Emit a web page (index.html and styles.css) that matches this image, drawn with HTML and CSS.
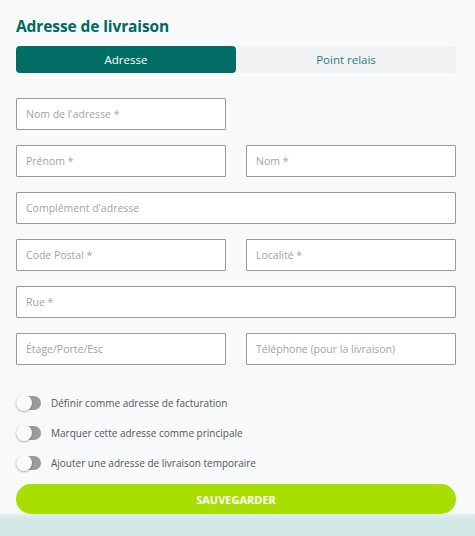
FILE: index.html
```html
<!DOCTYPE html>
<html lang="fr">
<head>
    <meta charset="UTF-8" />
    <meta name="viewport" content="width=device-width, initial-scale=1" />
    <title>Adresse de livraison</title>
    <link rel="stylesheet" href="styles.css">
</head>
<body>
    <div class="panel">
        <h1>Adresse de livraison</h1>

        <div class="tabs">
            <button type="button" class="tab active">Adresse</button>
            <button type="button" class="tab">Point relais</button>
        </div>

        <form id="addressForm">
            <div class="fields">
                <input type="text" placeholder="Nom de l'adresse *" />
                <div></div>
                <input type="text" placeholder="Prénom *" />
                <input type="text" placeholder="Nom *" />
                <input type="text" class="wide" placeholder="Complément d'adresse" />
                <input type="text" placeholder="Code Postal *" />
                <input type="text" placeholder="Localité *" />
                <input type="text" class="wide" placeholder="Rue *" />
                <input type="text" placeholder="Étage/Porte/Esc" />
                <input type="text" placeholder="Téléphone (pour la livraison)" />
            </div>

            <div class="toggles">
                <label class="toggle">
                    <input type="checkbox" />
                    <span class="track"></span>
                    Définir comme adresse de facturation
                </label>
                <label class="toggle">
                    <input type="checkbox" />
                    <span class="track"></span>
                    Marquer cette adresse comme principale
                </label>
                <label class="toggle">
                    <input type="checkbox" />
                    <span class="track"></span>
                    Ajouter une adresse de livraison temporaire
                </label>
            </div>

            <button type="submit" class="save">SAUVEGARDER</button>
        </form>
    </div>
    <div class="strip"></div>
</body>
</html>
```

FILE: styles.css
```css
html, body {
    height: 100%;
}
body {
    margin: 0;
    display: flex;
    flex-direction: column;
    font-family: "Open Sans", Arial, sans-serif;
    background: #f8f9fb;
    color: #555;
}
.panel {
    width: 440px;
    padding: 15px 19px 0 16px;
}
h1 {
    margin: 0;
    font-size: 15.5px;
    line-height: 22px;
    font-weight: 700;
    color: #00695f;
    letter-spacing: -0.1px;
}
.tabs {
    display: flex;
    margin-top: 9px;
    background: #f1f2f4;
    border-radius: 4px;
}
.tab {
    flex: 1;
    height: 27px;
    border: none;
    border-radius: 4px;
    background: transparent;
    color: #2a7d75;
    font-family: inherit;
    font-size: 11.5px;
    cursor: pointer;
}
.tab.active {
    background: #006e64;
    color: #fff;
}
.fields {
    display: grid;
    grid-template-columns: 210px 210px;
    column-gap: 20px;
    row-gap: 15px;
    margin-top: 25px;
}
.fields input {
    box-sizing: border-box;
    height: 32px;
    padding: 0 9px;
    border: 1px solid #9a9a9a;
    border-radius: 1px;
    background: #fff;
    font-family: inherit;
    font-size: 10.5px;
    color: #333;
}
.fields input::placeholder {
    color: #a3a3a3;
}
.fields .wide {
    grid-column: 1 / 3;
}
.toggles {
    display: flex;
    flex-direction: column;
    gap: 15px;
    margin-top: 30px;
}
.toggle {
    display: flex;
    align-items: center;
    gap: 10px;
    height: 15px;
    font-size: 10px;
    color: #555;
    cursor: pointer;
}
.toggle input {
    display: none;
}
.track {
    position: relative;
    width: 25px;
    height: 14px;
    border-radius: 7px;
    background: #9b9b9b;
}
.track::after {
    content: "";
    position: absolute;
    left: 0;
    top: -1px;
    width: 16px;
    height: 16px;
    border-radius: 50%;
    background: #fafafa;
    box-shadow: 0 1px 2px rgba(0,0,0,0.3);
}
.save {
    display: block;
    width: 100%;
    height: 30px;
    margin-top: 14px;
    border: none;
    border-radius: 15px;
    background: #a8df00;
    color: #fff;
    font-family: inherit;
    font-size: 11px;
    font-weight: 700;
    cursor: pointer;
}
.strip {
    flex: 1;
    background: linear-gradient(#e4efef, #d4e7e7 6px);
}
```
